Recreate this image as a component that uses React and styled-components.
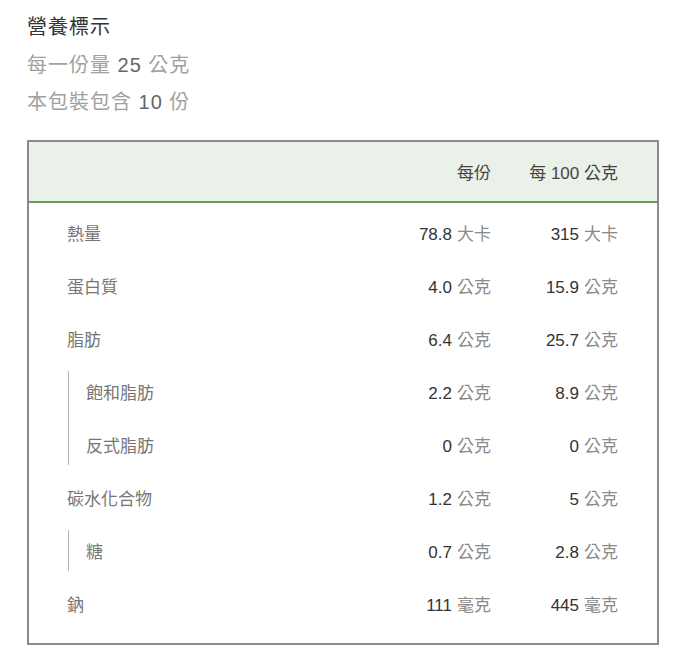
import React from 'react';
import styled, { createGlobalStyle } from 'styled-components';

const Global = createGlobalStyle`
  body {
    margin: 0;
    background: #fff;
    font-family: "Liberation Sans", "Noto Sans CJK TC", sans-serif;
  }
`

const Page = styled.div`
  padding: 12px 21px 0 27px;
`
const Title = styled.div`
  font-size: 20px;
  color: #333;
  letter-spacing: 1px;
  line-height: 30px;
  margin-bottom: 5px;
`
const Sub = styled.div`
  font-size: 20px;
  color: #a0a0a0;
  letter-spacing: 1px;
  line-height: 37px;

  b {
    font-weight: normal;
    color: #666;
  }
`
const Box = styled.div`
  margin-top: 19px;
  width: 632px;
  box-sizing: border-box;
  border: 2px solid #8a8a8a;
`
const Head = styled.div`
  display: grid;
  grid-template-columns: 1fr 120px 127px;
  align-items: center;
  height: 59px;
  padding: 0 39px 0 38px;
  background: #eaf1e8;
  border-bottom: 2px solid #6a9a5c;
  font-size: 17px;
  color: #444;
  text-align: right;
`
const Body = styled.div`
  padding: 3px 0 13px;
`
const Group = styled.div`
  position: relative;

  &::before {
    content: "";
    position: absolute;
    left: 39px;
    top: 6px;
    bottom: 6px;
    width: 1px;
    background: #b5b5b5;
  }
`
const Row = styled.div`
  display: grid;
  grid-template-columns: 1fr 120px 127px;
  align-items: center;
  height: 53px;
  padding: 0 39px 0 ${p => (p.sub ? 57 : 38)}px;
  font-size: 17px;
  text-align: right;
`
const Label = styled.span`
  text-align: left;
  color: #777;
`
const Val = styled.span`
  color: #333;

  small {
    font-size: 17px;
    color: #8a8a8a;
    margin-left: 5px;
  }
`

const rows = [
  ['熱量', '78.8', '315', '大卡'],
  ['蛋白質', '4.0', '15.9', '公克'],
  ['脂肪', '6.4', '25.7', '公克'],
  { group: [
    ['飽和脂肪', '2.2', '8.9', '公克'],
    ['反式脂肪', '0', '0', '公克'],
  ] },
  ['碳水化合物', '1.2', '5', '公克'],
  { group: [
    ['糖', '0.7', '2.8', '公克'],
  ] },
  ['鈉', '111', '445', '毫克'],
]

const NRow = ({ r, sub }) => (
  <Row sub={sub}>
    <Label>{r[0]}</Label>
    <Val>{r[1]}<small>{r[3]}</small></Val>
    <Val>{r[2]}<small>{r[3]}</small></Val>
  </Row>
)

export default function App() {
  return (
    <Page>
      <Global />
      <Title>營養標示</Title>
      <Sub>每一份量 <b>25</b> 公克</Sub>
      <Sub>本包裝包含 <b>10</b> 份</Sub>
      <Box>
        <Head>
          <span />
          <span>每份</span>
          <span>每 100 公克</span>
        </Head>
        <Body>
          {rows.map((r, i) =>
            r.group ? (
              <Group key={i}>
                {r.group.map((s, j) => <NRow key={j} r={s} sub />)}
              </Group>
            ) : (
              <NRow key={i} r={r} />
            )
          )}
        </Body>
      </Box>
    </Page>
  )
}
